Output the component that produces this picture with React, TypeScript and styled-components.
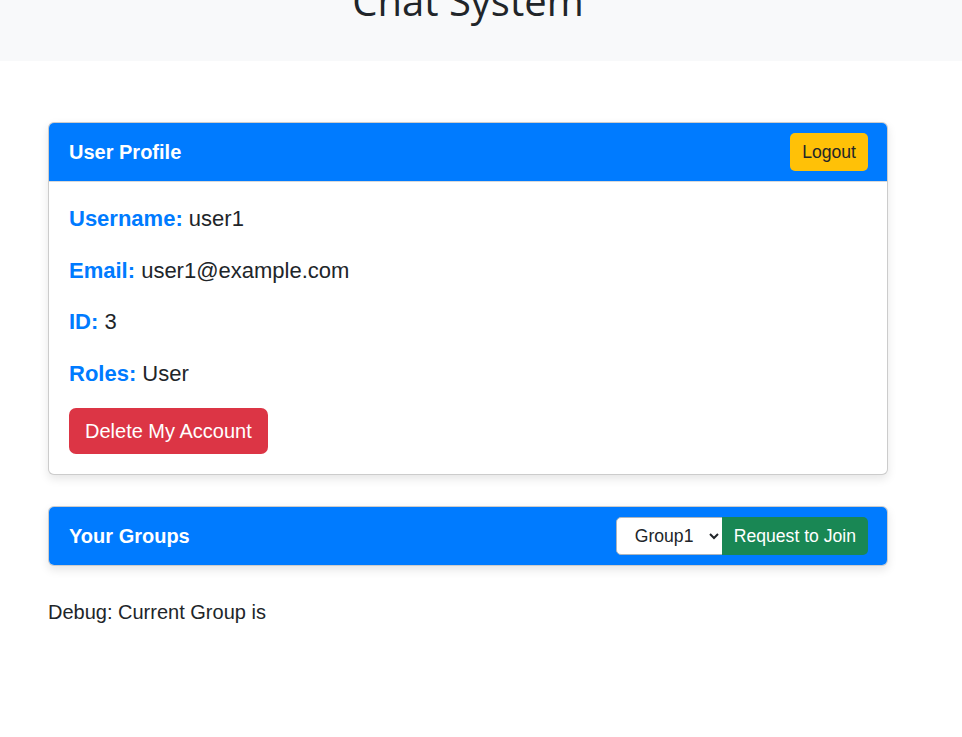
import { useState } from "react";
import styled, { createGlobalStyle } from "styled-components";

const GlobalStyle = createGlobalStyle`
  html, body {
    margin: 0;
    padding: 0;
    background: #fff;
    color: #212529;
    font-family: "Liberation Sans", Arial, sans-serif;
  }
`;

const TopBar = styled.header`
  display: flow-root;
  height: 61px;
  background: #f8f9fa;
`;

const TitleWrap = styled.div`
  width: 840px;
  margin-left: 48px;
  text-align: center;
`;

const Title = styled.h1`
  margin: -23px 0 0;
  font-family: "Open Sans", "Noto Sans", sans-serif;
  font-size: 40px;
  font-weight: 500;
  line-height: 48px;
  color: #212529;
`;

const Main = styled.main`
  width: 840px;
  margin-left: 48px;
  padding-top: 61px;
`;

const Card = styled.section`
  background: #fff;
  border: 1px solid rgba(0, 0, 0, 0.2);
  border-radius: 6px;
  box-shadow: 0 4px 10px rgba(0, 0, 0, 0.1);
  overflow: hidden;
  margin-bottom: 31px;
`;

const CardHeader = styled.div`
  height: 58px;
  box-sizing: border-box;
  padding: 0 19px 0 20px;
  background: #007bff;
  display: flex;
  align-items: center;
  justify-content: space-between;
`;

const CardTitle = styled.h2`
  margin: 0;
  color: #fff;
  font-size: 20px;
  font-weight: bold;
`;

const CardBody = styled.div`
  border-top: 1px solid rgba(0, 0, 0, 0.15);
  padding: 20px;
`;

const Field = styled.p`
  margin: 0 0 18.5px;
  font-size: 22px;
  line-height: 33px;
`;

const Label = styled.strong`
  color: #007bff;
`;

const Button = styled.button<{ tone: "warning" | "danger" | "success"; size?: "lg" }>`
  border: 1px solid transparent;
  font-family: inherit;
  cursor: pointer;
  font-size: ${(p) => (p.size === "lg" ? "20px" : "17.6px")};
  line-height: 1.5;
  padding: ${(p) => (p.size === "lg" ? "7px 15px" : "5px 11px")};
  border-radius: ${(p) => (p.size === "lg" ? "7px" : "5px")};
  background: ${(p) =>
    p.tone === "warning" ? "#ffc107" : p.tone === "danger" ? "#dc3545" : "#198754"};
  color: ${(p) => (p.tone === "warning" ? "#212529" : "#fff")};
`;

const JoinGroup = styled.div`
  display: flex;
  align-items: stretch;
`;

const GroupSelect = styled.select`
  width: 107px;
  height: 38px;
  box-sizing: border-box;
  padding: 0 6px 0 14px;
  font-family: inherit;
  font-size: 17.6px;
  color: #212529;
  background: #fff;
  border: 1px solid #adb5bd;
  border-radius: 5px 0 0 5px;
`;

const JoinButton = styled(Button)`
  border-radius: 0 5px 5px 0;
  margin-left: -1px;
`;

const Debug = styled.p`
  margin: 0;
  font-size: 20px;
  line-height: 30px;
`;

export default function App() {
  const [group, setGroup] = useState("Group1");

  return (
    <>
      <GlobalStyle />
      <TopBar>
        <TitleWrap>
          <Title>Chat System</Title>
        </TitleWrap>
      </TopBar>
      <Main>
        <Card>
          <CardHeader>
            <CardTitle>User Profile</CardTitle>
            <Button tone="warning">Logout</Button>
          </CardHeader>
          <CardBody>
            <Field><Label>Username:</Label> user1</Field>
            <Field><Label>Email:</Label> user1@example.com</Field>
            <Field><Label>ID:</Label> 3</Field>
            <Field><Label>Roles:</Label> User</Field>
            <Button tone="danger" size="lg">Delete My Account</Button>
          </CardBody>
        </Card>
        <Card>
          <CardHeader>
            <CardTitle>Your Groups</CardTitle>
            <JoinGroup>
              <GroupSelect value={group} onChange={(e) => setGroup(e.target.value)}>
                <option>Group1</option>
                <option>Group2</option>
              </GroupSelect>
              <JoinButton tone="success">Request to Join</JoinButton>
            </JoinGroup>
          </CardHeader>
        </Card>
        <Debug>Debug: Current Group is </Debug>
      </Main>
    </>
  );
}
